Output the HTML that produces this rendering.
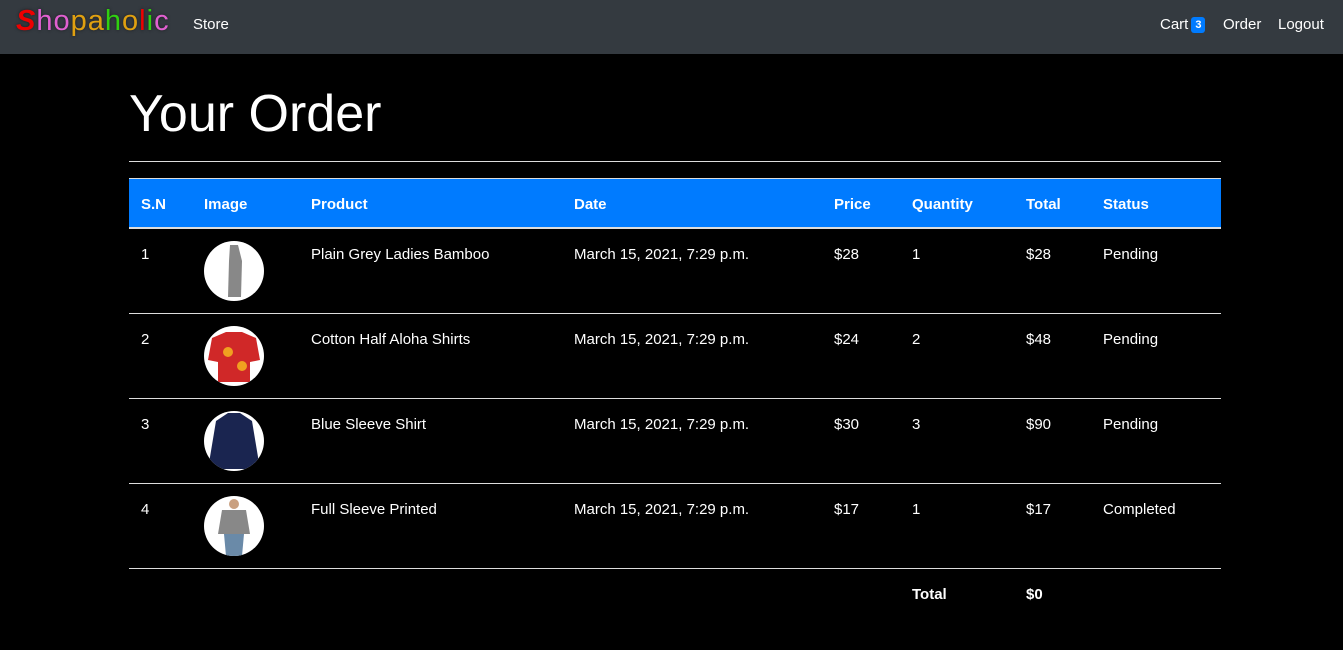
<!DOCTYPE html>
<html><head><meta charset="utf-8"><style>
*{margin:0;padding:0;box-sizing:border-box}
body{width:1343px;height:650px;background:#000;color:#fff;font-family:"Liberation Sans",sans-serif;position:relative;overflow:hidden}
.nav{position:absolute;left:0;top:0;width:1343px;height:54px;background:#343a40}
.a{position:absolute;font-size:15px;color:#fff;white-space:nowrap}
.logo{position:absolute;left:16px;top:5px;font-size:29px;letter-spacing:1px;text-shadow:0 0 3px rgba(0,0,0,.5)}
.badge{display:inline-block;background:#007bff;color:#fff;font-size:11px;font-weight:bold;padding:2px 4px;border-radius:3px;margin-left:3px;vertical-align:1px}
h1{position:absolute;left:129px;top:84px;font-size:52px;font-weight:300;color:#fff}
.hr{position:absolute;left:129px;width:1092px;height:1px;background:#ddd}
.head{position:absolute;left:129px;top:179px;width:1092px;height:49px;background:#007bff}
.t{position:absolute;font-size:15px;white-space:nowrap}
.b{font-weight:bold}
.img{position:absolute;left:204px;width:60px;height:60px;border-radius:50%;background:#fff;overflow:hidden}
</style></head><body>
<div class="nav">
<div class="logo"><span style="color:#e00;font-style:italic;font-weight:bold">S</span><span style="color:#e060d0">ho</span><span style="color:#e0a010">pa</span><span style="color:#30d010">h</span><span style="color:#e0a010">o</span><span style="color:#e00">l</span><span style="color:#30d010">i</span><span style="color:#e060d0">c</span></div>
<div class="a" style="left:193px;top:16px">Store</div>
<div class="a" style="left:1160px;top:16px">Cart<span class="badge">3</span></div>
<div class="a" style="left:1223px;top:16px">Order</div>
<div class="a" style="left:1278px;top:16px">Logout</div>
</div>
<h1>Your Order</h1>
<div class="hr" style="top:161px"></div>
<div class="hr" style="top:178px"></div>
<div class="head"></div>
<div class="hr" style="top:227px;height:2px"></div>
<div class="t b" style="left:141px;top:196px">S.N</div>
<div class="t b" style="left:204px;top:196px">Image</div>
<div class="t b" style="left:311px;top:196px">Product</div>
<div class="t b" style="left:574px;top:196px">Date</div>
<div class="t b" style="left:834px;top:196px">Price</div>
<div class="t b" style="left:912px;top:196px">Quantity</div>
<div class="t b" style="left:1026px;top:196px">Total</div>
<div class="t b" style="left:1103px;top:196px">Status</div>

<div class="t" style="left:141px;top:246px">1</div>
<div class="img" style="top:241px"><svg width="60" height="60"><path d="M26 4 L34 4 L38 20 L37 56 L24 56 L25 20Z" fill="#888"/></svg></div>
<div class="t" style="left:311px;top:246px">Plain Grey Ladies Bamboo</div>
<div class="t" style="left:574px;top:246px">March 15, 2021, 7:29 p.m.</div>
<div class="t" style="left:834px;top:246px">$28</div><div class="t" style="left:912px;top:246px">1</div><div class="t" style="left:1026px;top:246px">$28</div><div class="t" style="left:1103px;top:246px">Pending</div>
<div class="hr" style="top:313px"></div>

<div class="t" style="left:141px;top:331px">2</div>
<div class="img" style="top:326px"><svg width="60" height="60"><path d="M8 12 L22 6 L38 6 L52 12 L56 34 L46 36 L46 56 L14 56 L14 36 L4 34Z" fill="#d02828"/><circle cx="24" cy="26" r="5" fill="#f0a020"/><circle cx="38" cy="40" r="5" fill="#f0a020"/></svg></div>
<div class="t" style="left:311px;top:331px">Cotton Half Aloha Shirts</div>
<div class="t" style="left:574px;top:331px">March 15, 2021, 7:29 p.m.</div>
<div class="t" style="left:834px;top:331px">$24</div><div class="t" style="left:912px;top:331px">2</div><div class="t" style="left:1026px;top:331px">$48</div><div class="t" style="left:1103px;top:331px">Pending</div>
<div class="hr" style="top:398px"></div>

<div class="t" style="left:141px;top:416px">3</div>
<div class="img" style="top:411px"><svg width="60" height="60"><path d="M12 10 L24 2 L36 2 L48 10 L56 58 L4 58Z" fill="#1a2550"/></svg></div>
<div class="t" style="left:311px;top:416px">Blue Sleeve Shirt</div>
<div class="t" style="left:574px;top:416px">March 15, 2021, 7:29 p.m.</div>
<div class="t" style="left:834px;top:416px">$30</div><div class="t" style="left:912px;top:416px">3</div><div class="t" style="left:1026px;top:416px">$90</div><div class="t" style="left:1103px;top:416px">Pending</div>
<div class="hr" style="top:483px"></div>

<div class="t" style="left:141px;top:501px">4</div>
<div class="img" style="top:496px"><svg width="60" height="60"><path d="M18 14 L42 14 L46 38 L14 38Z" fill="#888"/><circle cx="30" cy="8" r="5" fill="#c9a080"/><path d="M20 38 L40 38 L38 60 L22 60Z" fill="#6a8aa8"/></svg></div>
<div class="t" style="left:311px;top:501px">Full Sleeve Printed</div>
<div class="t" style="left:574px;top:501px">March 15, 2021, 7:29 p.m.</div>
<div class="t" style="left:834px;top:501px">$17</div><div class="t" style="left:912px;top:501px">1</div><div class="t" style="left:1026px;top:501px">$17</div><div class="t" style="left:1103px;top:501px">Completed</div>
<div class="hr" style="top:568px"></div>

<div class="t b" style="left:912px;top:586px">Total</div>
<div class="t b" style="left:1026px;top:586px">$0</div>
</body></html>
